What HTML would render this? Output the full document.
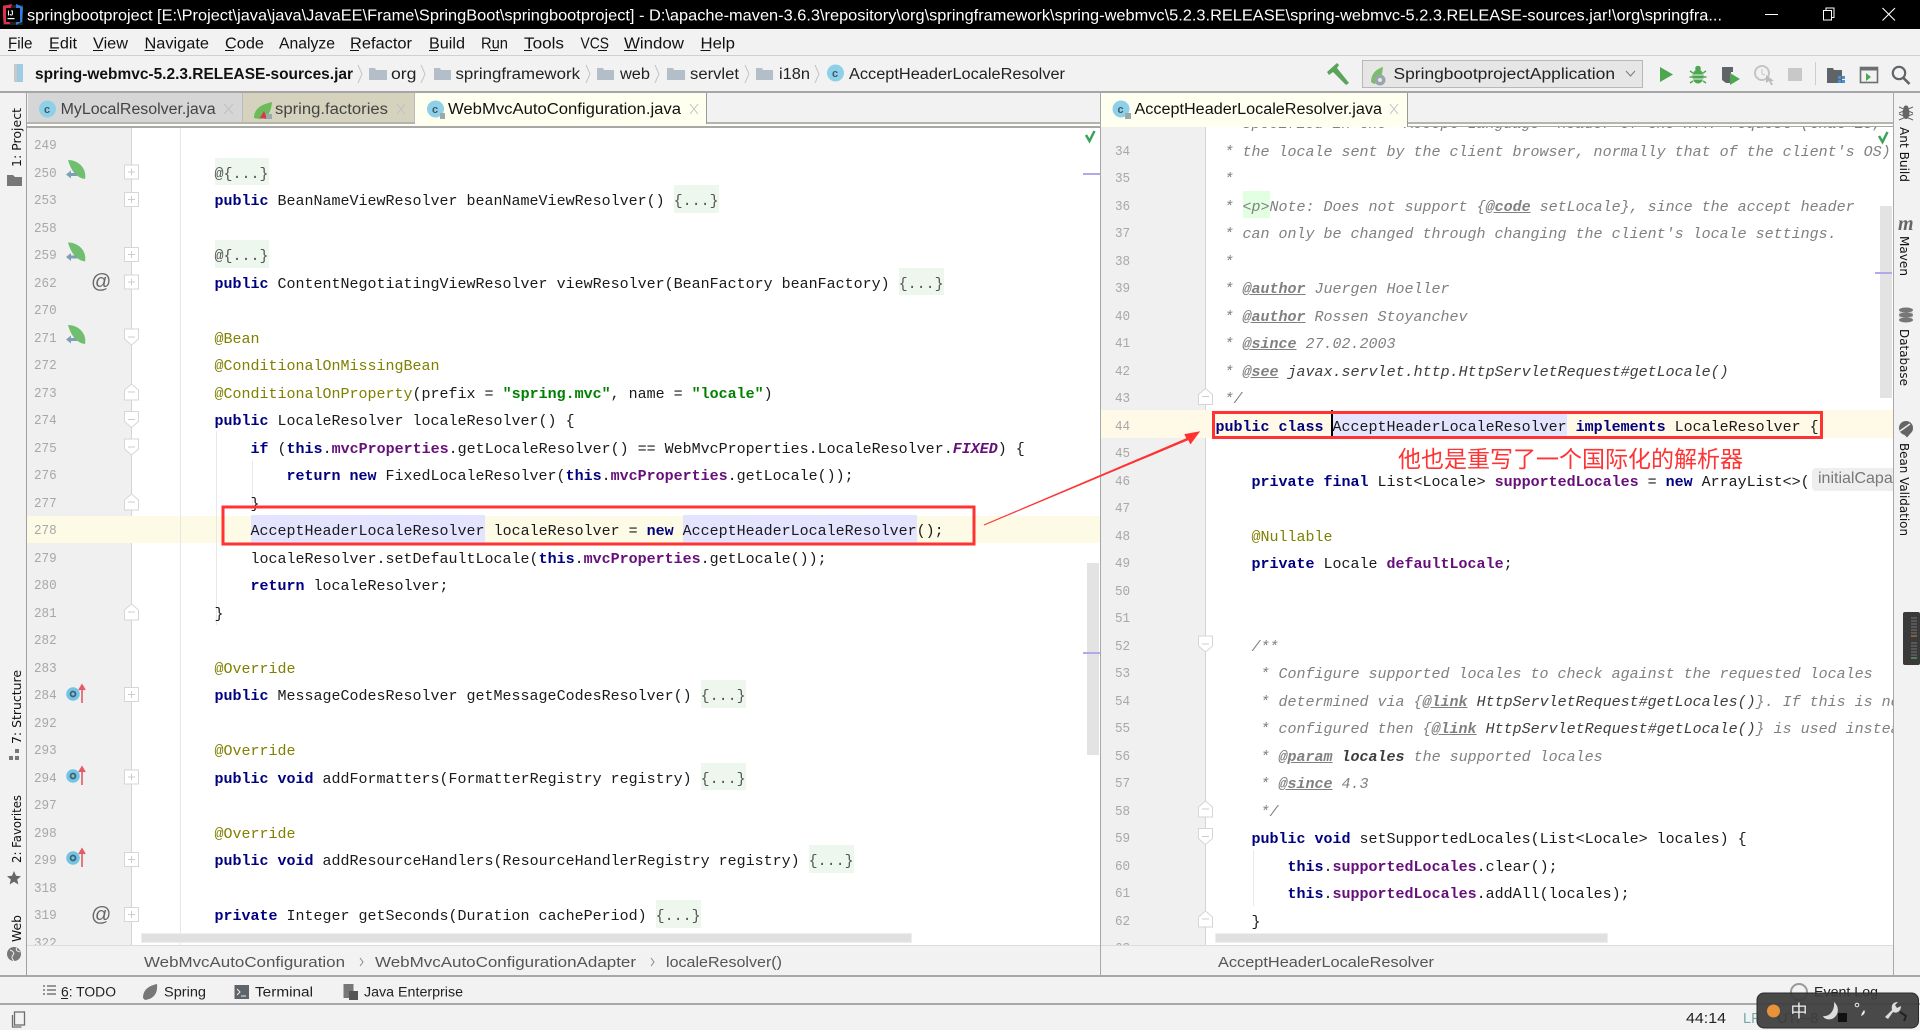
<!DOCTYPE html>
<html lang="en"><head><meta charset="utf-8"><title>springbootproject</title>
<style>
html,body{margin:0;padding:0;background:#f2f2f2}
body{width:1920px;height:1030px;position:relative;overflow:hidden;font-family:"Liberation Sans",sans-serif}
.a{position:absolute}
pre{margin:0;position:absolute;font:15px/27.5px "Liberation Mono",monospace;color:#1a1a1a;white-space:pre}
pre.n{font-size:14px;color:#a8a8a8;transform:scaleX(.9);transform-origin:left top}
b.k{color:#000080;font-weight:bold}
b.d{color:#660e7a;font-weight:bold}
b.s{color:#008000;font-weight:bold}
i.an{color:#808000;font-style:normal}
i.c{color:#808080;font-style:italic}
i.c b{text-decoration:underline;font-weight:bold}
i.c u{color:#3d3d3d;text-decoration:none}
i.c em{color:#3d3d3d;font-weight:bold;font-style:italic}
.f{background:#edf7ed;padding:7.75px 0 2.75px;color:#555}
.h{background:#e4e4ff;padding:7.75px 0 2.75px}
svg{position:absolute;left:0;top:0}
</style></head><body>
<!-- chrome -->
<div class="a" style="left:0;top:0;width:1920px;height:29px;background:#000"></div>
<div class="a" style="left:0;top:55px;width:1920px;height:1px;background:#d0d0d0"></div>
<div class="a" style="left:0;top:91px;width:1920px;height:2px;background:#a6a6a6"></div>
<!-- tabs -->
<div class="a" style="left:27px;top:122px;width:1866px;height:2px;background:#b4b4b4"></div>
<div class="a" style="left:27px;top:124px;width:1866px;height:1.5px;background:#fffff0"></div>
<div class="a" style="left:27px;top:125.5px;width:1866px;height:2px;background:#a8a8a8"></div>
<div class="a" style="left:27.5px;top:93px;width:214.5px;height:29px;background:#d6d6d6;border-right:1px solid #bbb"></div>
<div class="a" style="left:243px;top:93px;width:171px;height:29px;background:#d5d2bd;border-right:1px solid #bbb"></div>
<div class="a" style="left:415px;top:93px;width:291px;height:31px;background:#fffff0;border-right:1px solid #999"></div>
<div class="a" style="left:1101px;top:93px;width:306px;height:34px;background:#fffff0;border-right:1px solid #999"></div>
<!-- panes -->
<div class="a" style="left:27px;top:127.5px;width:105px;height:817.5px;background:#f0f0f0;border-right:1px solid #d4d4d4;box-sizing:border-box"></div>
<div class="a" style="left:132px;top:127.5px;width:968px;height:817.5px;background:#fff"></div>
<div class="a" style="left:1101px;top:127px;width:105px;height:818px;background:#f0f0f0;border-right:1px solid #d4d4d4;box-sizing:border-box"></div>
<div class="a" style="left:1206px;top:127px;width:687px;height:818px;background:#fff"></div>
<div class="a" style="left:27px;top:515.5px;width:1073px;height:27.5px;background:#fdfbe6"></div>
<div class="a" style="left:1101px;top:410px;width:792px;height:27.5px;background:#fff9e8"></div>
<div class="a" style="left:180px;top:127.5px;width:1px;height:817.5px;background:#e6e6e6"></div>
<div class="a" style="left:216px;top:431px;width:1px;height:194px;background:#e8e8e8"></div>
<div class="a" style="left:252px;top:461px;width:1px;height:46px;background:#e8e8e8"></div>
<div class="a" style="left:1253px;top:850px;width:1px;height:56px;background:#e8e8e8"></div>
<!-- left numbers -->
<pre class="n a" style="left:34px;top:133px;height:812px;overflow:hidden">249
250
253
258
259
262
270
271
272
273
274
275
276
277
278
279
280
281
282
283
284
292
293
294
297
298
299
318
319
322</pre>
<!-- left code -->
<div class="a" style="left:132px;top:127.5px;width:955px;height:817.5px;overflow:hidden">
<pre style="left:82.5px;top:5.5px">

<span class="f">@{...}</span>
<b class="k">public</b> BeanNameViewResolver beanNameViewResolver() <span class="f">{...}</span>

<span class="f">@{...}</span>
<b class="k">public</b> ContentNegotiatingViewResolver viewResolver(BeanFactory beanFactory) <span class="f">{...}</span>

<i class="an">@Bean</i>
<i class="an">@ConditionalOnMissingBean</i>
<i class="an">@ConditionalOnProperty</i>(prefix = <b class="s">"spring.mvc"</b>, name = <b class="s">"locale"</b>)
<b class="k">public</b> LocaleResolver localeResolver() {
    <b class="k">if</b> (<b class="k">this</b>.<b class="d">mvcProperties</b>.getLocaleResolver() == WebMvcProperties.LocaleResolver.<b class="d" style="font-style:italic">FIXED</b>) {
        <b class="k">return new</b> FixedLocaleResolver(<b class="k">this</b>.<b class="d">mvcProperties</b>.getLocale());
    }
    <span class="h">AcceptHeaderLocaleResolver</span> localeResolver = <b class="k">new</b> <span class="h">AcceptHeaderLocaleResolver</span>();
    localeResolver.setDefaultLocale(<b class="k">this</b>.<b class="d">mvcProperties</b>.getLocale());
    <b class="k">return</b> localeResolver;
}

<i class="an">@Override</i>
<b class="k">public</b> MessageCodesResolver getMessageCodesResolver() <span class="f">{...}</span>

<i class="an">@Override</i>
<b class="k">public void</b> addFormatters(FormatterRegistry registry) <span class="f">{...}</span>

<i class="an">@Override</i>
<b class="k">public void</b> addResourceHandlers(ResourceHandlerRegistry registry) <span class="f">{...}</span>

<b class="k">private</b> Integer getSeconds(Duration cachePeriod) <span class="f">{...}</span></pre>
</div>
<!-- right numbers -->
<pre class="n a" style="left:1115px;top:138.5px;height:806px;overflow:hidden">34
35
36
37
38
39
40
41
42
43
44
45
46
47
48
49
50
51
52
53
54
55
56
57
58
59
60
61
62
63</pre>
<!-- right code -->
<div class="a" style="left:1206px;top:127px;width:687px;height:818px;overflow:hidden">
<pre style="left:9.5px;top:-16px"><i class="c"> * specified in the "Accept-Language" header of the HTTP request (that is,</i>
<i class="c"> * the locale sent by the client browser, normally that of the client's OS).</i>
<i class="c"> *</i>
<i class="c"> * <span style="background:#e2ffe2;padding:7.75px 0 2.75px">&lt;p&gt;</span>Note: Does not support {<b>@code</b> setLocale}, since the accept header</i>
<i class="c"> * can only be changed through changing the client's locale settings.</i>
<i class="c"> *</i>
<i class="c"> * <b>@author</b> Juergen Hoeller</i>
<i class="c"> * <b>@author</b> Rossen Stoyanchev</i>
<i class="c"> * <b>@since</b> 27.02.2003</i>
<i class="c"> * <b>@see</b> <u>javax.servlet.http.HttpServletRequest#getLocale()</u></i>
<i class="c"> */</i>
<b class="k">public class</b> <span class="h">AcceptHeaderLocaleResolver</span> <b class="k">implements</b> LocaleResolver {

    <b class="k">private final</b> List&lt;Locale&gt; <b class="d">supportedLocales</b> = <b class="k">new</b> ArrayList&lt;&gt;(

    <i class="an">@Nullable</i>
    <b class="k">private</b> Locale <b class="d">defaultLocale</b>;


    <i class="c">/**</i>
<i class="c">     * Configure supported locales to check against the requested locales</i>
<i class="c">     * determined via {<b>@link</b> <u>HttpServletRequest#getLocales()</u>}. If this is not</i>
<i class="c">     * configured then {<b>@link</b> <u>HttpServletRequest#getLocale()</u>} is used instead</i>
<i class="c">     * <b>@param</b> <em>locales</em> the supported locales</i>
<i class="c">     * <b>@since</b> 4.3</i>
<i class="c">     */</i>
    <b class="k">public void</b> setSupportedLocales(List&lt;Locale&gt; locales) {
        <b class="k">this</b>.<b class="d">supportedLocales</b>.clear();
        <b class="k">this</b>.<b class="d">supportedLocales</b>.addAll(locales);
    }</pre>
</div>
<!-- caret -->
<div class="a" style="left:1331px;top:410px;width:2px;height:27.5px;background:#000"></div>
<div class="a" style="left:1812px;top:468px;width:81px;height:23px;background:#eeeeee;border-radius:4px 0 0 4px;overflow:hidden;color:#787878;font-size:16px;line-height:22px;padding-left:6px;box-sizing:border-box;white-space:nowrap">initialCapacity:</div>
<!-- scrollbars -->
<div class="a" style="left:1087px;top:563px;width:12px;height:192px;background:#e3e3e3"></div>
<div class="a" style="left:1880px;top:206px;width:12px;height:192px;background:#e3e3e3"></div>
<div class="a" style="left:141px;top:933px;width:771px;height:10px;background:#e0e0e0;border:1px solid #eee;box-sizing:border-box"></div>
<div class="a" style="left:1215px;top:933px;width:393px;height:10px;background:#e0e0e0;border:1px solid #eee;box-sizing:border-box"></div>
<div class="a" style="left:1083px;top:173px;width:17px;height:2px;background:#b4a8ec"></div>
<div class="a" style="left:1083px;top:652px;width:17px;height:2px;background:#b4a8ec"></div>
<div class="a" style="left:1875px;top:272px;width:17px;height:2px;background:#b4a8ec"></div>
<!-- bottom -->
<div class="a" style="left:27px;top:945px;width:1866px;height:30px;background:#f2f2f2;border-top:1px solid #dcdcdc;box-sizing:border-box"></div>
<div class="a" style="left:0;top:975px;width:1920px;height:1.5px;background:#a8a8a8"></div>
<div class="a" style="left:0;top:1003px;width:1920px;height:1.5px;background:#a8a8a8"></div>
<div class="a" style="left:26px;top:92px;width:1px;height:883px;background:#a0a0a0"></div>
<div class="a" style="left:1100px;top:92px;width:1px;height:883px;background:#a8a8a8"></div>
<div class="a" style="left:1893px;top:92px;width:1px;height:883px;background:#a8a8a8"></div>

<svg width="1920" height="1030" viewBox="0 0 1920 1030" xmlns="http://www.w3.org/2000/svg" font-family="'Liberation Sans',sans-serif">
<!-- title bar -->
<g>
<rect x="3" y="5" width="20" height="20" fill="#222"/>
<path d="M3 6l9-2-3 10-6 2zM3 16l6-2 1 10-6 0z" fill="#e0324a"/>
<path d="M16 4l7 3-1 15-6 3z" fill="#2d7fe0"/>
<rect x="6" y="8" width="14" height="14" fill="#000"/>
<text x="7.5" y="15.5" font-size="7" font-weight="bold" fill="#fff">IJ</text>
<rect x="7.5" y="18" width="7" height="1.2" fill="#fff"/>
<text x="27" y="20.5" font-size="16" fill="#fff" textLength="1695" lengthAdjust="spacingAndGlyphs">springbootproject [E:\Project\java\java\JavaEE\Frame\SpringBoot\springbootproject] - D:\apache-maven-3.6.3\repository\org\springframework\spring-webmvc\5.2.3.RELEASE\spring-webmvc-5.2.3.RELEASE-sources.jar!\org\springfra...</text>
<rect x="1765" y="14" width="13" height="1" fill="#fff"/>
<path d="M1823.5 10.5h8v9.5h-8zM1826 10.5v-2.5h8v9.5h-2.5" fill="none" stroke="#fff"/>
<path d="M1882.5 8l12.5 12.5M1895 8l-12.5 12.5" stroke="#fff" stroke-width="1.1"/>
</g>
<!-- menu -->
<g font-size="15.5" fill="#111">
<text x="8" y="48.5" textLength="24.5" lengthAdjust="spacingAndGlyphs">File</text>
<text x="49" y="48.5" textLength="28" lengthAdjust="spacingAndGlyphs">Edit</text>
<text x="93" y="48.5" textLength="35" lengthAdjust="spacingAndGlyphs">View</text>
<text x="144.5" y="48.5" textLength="64.5" lengthAdjust="spacingAndGlyphs">Navigate</text>
<text x="225" y="48.5" textLength="39" lengthAdjust="spacingAndGlyphs">Code</text>
<text x="279" y="48.5" textLength="56" lengthAdjust="spacingAndGlyphs">Analyze</text>
<text x="350" y="48.5" textLength="62" lengthAdjust="spacingAndGlyphs">Refactor</text>
<text x="429" y="48.5" textLength="36" lengthAdjust="spacingAndGlyphs">Build</text>
<text x="481" y="48.5" textLength="27" lengthAdjust="spacingAndGlyphs">Run</text>
<text x="524" y="48.5" textLength="40" lengthAdjust="spacingAndGlyphs">Tools</text>
<text x="580.5" y="48.5" textLength="28.5" lengthAdjust="spacingAndGlyphs">VCS</text>
<text x="624" y="48.5" textLength="60" lengthAdjust="spacingAndGlyphs">Window</text>
<text x="700.5" y="48.5" textLength="34.5" lengthAdjust="spacingAndGlyphs">Help</text>
</g>
<g fill="#111">
<rect x="8" y="50" width="8" height="1"/><rect x="49" y="50" width="8" height="1"/><rect x="93" y="50" width="10" height="1"/><rect x="144.5" y="50" width="10" height="1"/><rect x="225" y="50" width="9" height="1"/><rect x="350" y="50" width="9" height="1"/><rect x="429" y="50" width="9" height="1"/><rect x="490" y="50" width="8" height="1"/><rect x="524" y="50" width="8" height="1"/><rect x="598" y="50" width="9" height="1"/><rect x="624" y="50" width="13" height="1"/><rect x="700.5" y="50" width="10" height="1"/>
</g>
<!-- nav bar -->
<g>
<rect x="14" y="64" width="9" height="18" fill="#9ccde2"/><rect x="14" y="64" width="3" height="18" fill="#c8c8c8"/>
<text x="35" y="79" font-size="15.5" font-weight="bold" fill="#111" textLength="318" lengthAdjust="spacingAndGlyphs">spring-webmvc-5.2.3.RELEASE-sources.jar</text>
<g fill="none" stroke="#c4c4c4"><path d="M358 65l4 9-4 9M421 65l4 9-4 9M586 65l4 9-4 9M655 65l4 9-4 9M745 65l4 9-4 9M815 65l4 9-4 9"/></g>
<g fill="#b3bec8"><path d="M369 68h6l1 2h11v10h-18z"/><path d="M434 68h6l1 2h10v10h-17z"/><path d="M597 68h6l1 2h10v10h-17z"/><path d="M667 68h6l1 2h11v10h-18z"/><path d="M756 68h6l1 2h10v10h-17z"/></g>
<g font-size="15.5" fill="#222">
<text x="391" y="79" textLength="25.5" lengthAdjust="spacingAndGlyphs">org</text>
<text x="455.5" y="79" textLength="124.5" lengthAdjust="spacingAndGlyphs">springframework</text>
<text x="620" y="79" textLength="30" lengthAdjust="spacingAndGlyphs">web</text>
<text x="690" y="79" textLength="49" lengthAdjust="spacingAndGlyphs">servlet</text>
<text x="779" y="79" textLength="31" lengthAdjust="spacingAndGlyphs">i18n</text>
<text x="849" y="79" textLength="216" lengthAdjust="spacingAndGlyphs">AcceptHeaderLocaleResolver</text>
</g>
<circle cx="835.5" cy="73" r="8.5" fill="#8ed0e8"/><text x="832" y="77" font-size="11" font-weight="bold" fill="#3d5a68">c</text>
<!-- right toolbar -->
<path d="M1327 72l10-9 2 2-2 3 12 15-3 2-13-13-4 3z" fill="#5aa35a"/>
<rect x="1362.5" y="60.5" width="280" height="27" fill="#e6e6e6" stroke="#b8b8b8"/>
<path d="M1371 82c0-8 5-13 12-15-1 10-3 15-9 17z" fill="#7cbd6a"/>
<circle cx="1380" cy="80" r="5.5" fill="#9aa5ad"/><circle cx="1380" cy="80" r="2" fill="#e6e6e6"/>
<text x="1393.5" y="79" font-size="15.5" fill="#222" textLength="221.5" lengthAdjust="spacingAndGlyphs">SpringbootprojectApplication</text>
<path d="M1626 71l4.5 5 4.5-5" fill="none" stroke="#777"/>
<path d="M1660 67l13 7.500-13 7.500z" fill="#4fa650"/>
<ellipse cx="1698" cy="76.500" rx="5.500" ry="7" fill="#4fa650"/><circle cx="1698" cy="68.500" r="2.800" fill="#4fa650"/>
<path d="M1690 71l3 2M1706 71l-3 2M1689.500 77h3M1706.500 77h-3M1690 83l3-2M1706 83l-3-2" stroke="#4fa650" stroke-width="1.500" fill="none"/>
<path d="M1693 75h10M1693 79h10" stroke="#e8f2e8" stroke-width="1"/>
<path d="M1722 67h11v5h-2v11l-5 0-4-3z" fill="#5f6468"/><path d="M1730 73l10 6-10 6z" fill="#4fa650"/>
<circle cx="1762" cy="73" r="7" fill="none" stroke="#c4c4c4" stroke-width="2"/><path d="M1762 69v5l3 1" stroke="#c4c4c4" fill="none"/><path d="M1766 75l8 6-3 0 2 4-2 0-2-4-3 2z" fill="#bbb"/>
<rect x="1788" y="68" width="14" height="13" fill="#c8c8c8"/>
<rect x="1815" y="62" width="1" height="23" fill="#ccc"/>
<path d="M1827 68h6l1 2h8v13h-15z" fill="#5f6468"/><path d="M1838 76h3v3h-3zM1842 76h3v3h-3zM1838 80h3v3h-3zM1842 80h3v3h-3z" fill="#4a90d9"/>
<rect x="1860.5" y="67.5" width="17" height="15" fill="none" stroke="#6a6f72" stroke-width="1.6"/><rect x="1860.5" y="67.5" width="17" height="3" fill="#6a6f72"/><path d="M1866 73l5 4-5 4z" fill="#4fa650"/>
<circle cx="1899" cy="73" r="6.2" fill="none" stroke="#5f6468" stroke-width="2.2"/><path d="M1903.5 78l6 6" stroke="#5f6468" stroke-width="2.6"/>
</g>
<!-- tab labels -->
<g font-size="15.5" fill="#444">
<text x="60.6" y="114" textLength="155" lengthAdjust="spacingAndGlyphs">MyLocalResolver.java</text>
<text x="275" y="114" textLength="113" lengthAdjust="spacingAndGlyphs">spring.factories</text>
<text x="448" y="114" fill="#111" textLength="233" lengthAdjust="spacingAndGlyphs">WebMvcAutoConfiguration.java</text>
<text x="1134.5" y="114" fill="#111" textLength="247.5" lengthAdjust="spacingAndGlyphs">AcceptHeaderLocaleResolver.java</text>
</g>
<g stroke="#c0c0c0" stroke-width="1" fill="none"><path d="M224 104l9 10M233 104l-9 10M397 104l8 10M405 104l-8 10M690 104l8 10M698 104l-8 10M1390 104l8 10M1398 104l-8 10"/></g>
<circle cx="47.5" cy="109" r="8.5" fill="#8ed0e8"/><text x="44" y="113" font-size="11" font-weight="bold" fill="#3d5a68">c</text>
<circle cx="435.5" cy="109" r="8.5" fill="#8ed0e8"/><text x="432" y="113" font-size="11" font-weight="bold" fill="#3d5a68">c</text><rect x="440" y="113" width="5" height="6" fill="#9aa"/>
<circle cx="1121" cy="109" r="8.5" fill="#8ed0e8"/><text x="1117.5" y="113" font-size="11" font-weight="bold" fill="#3d5a68">c</text><rect x="1125" y="113" width="6" height="6" fill="#9aa"/>
<path d="M254 118c0-8 5-13 18-16-1 11-5 16-12 17z" fill="#6cba5a"/><path d="M264 111l3 8-7-1z" fill="#e0324a"/><rect x="266" y="114" width="6" height="5" fill="#9aa"/>
<!-- green checks -->
<path d="M1086 135l3.500 6 5-10" fill="none" stroke="#3aa35a" stroke-width="2.500"/>
<path d="M1879 136l3.500 6 5-10" fill="none" stroke="#3aa35a" stroke-width="2.500"/>
<!-- left tool strip -->
<g font-family="'DejaVu Sans',sans-serif" font-size="12.500" fill="#111">
<text transform="translate(21,167) rotate(-90)" textLength="59" lengthAdjust="spacingAndGlyphs">1: Project</text>
<text transform="translate(21,744) rotate(-90)" textLength="74" lengthAdjust="spacingAndGlyphs">7: Structure</text>
<text transform="translate(21,863) rotate(-90)" textLength="68" lengthAdjust="spacingAndGlyphs">2: Favorites</text>
<text transform="translate(21,942) rotate(-90)" textLength="27" lengthAdjust="spacingAndGlyphs">Web</text>
</g>
<path d="M7 175h6l2 2h7v9H7z" fill="#777"/>
<g fill="#777"><rect x="9" y="756" width="4" height="4"/><rect x="15" y="756" width="4" height="4"/><rect x="15" y="749" width="4" height="4"/></g>
<path d="M14 871l2 4.700 5 .5-3.800 3.300 1.200 5-4.400-2.700-4.400 2.700 1.200-5-3.800-3.300 5-.5z" fill="#666"/>
<circle cx="14" cy="954" r="7" fill="#777"/><path d="M10 950c3 1 5 3 3 5s-1 4 1 6M17 948c-2 2 0 3 3 4" stroke="#eee" fill="none"/>
<!-- right tool strip -->
<g font-family="'DejaVu Sans',sans-serif" font-size="12.500" fill="#111">
<text transform="translate(1900,127) rotate(90)" textLength="55" lengthAdjust="spacingAndGlyphs">Ant Build</text>
<text transform="translate(1900,236) rotate(90)" textLength="40" lengthAdjust="spacingAndGlyphs">Maven</text>
<text transform="translate(1900,329) rotate(90)" textLength="57" lengthAdjust="spacingAndGlyphs">Database</text>
<text transform="translate(1900,443) rotate(90)" textLength="93" lengthAdjust="spacingAndGlyphs">Bean Validation</text>
</g>
<g fill="#666"><ellipse cx="1906" cy="113" rx="3.500" ry="6"/><circle cx="1906" cy="108" r="2.500"/><path d="M1899 107l14 6M1913 107l-14 6M1899 120l14-6M1913 120l-14-6" stroke="#666"/></g>
<text x="1898" y="230" font-family="'Liberation Serif',serif" font-size="20" font-style="italic" font-weight="bold" fill="#666">m</text>
<g fill="#777"><ellipse cx="1906" cy="310" rx="7" ry="2.500"/><ellipse cx="1906" cy="315" rx="7" ry="2.500"/><ellipse cx="1906" cy="320" rx="7" ry="2.500"/><ellipse cx="1906" cy="315" rx="7" ry="7" opacity=".25"/></g>
<circle cx="1906" cy="428" r="7" fill="#666"/><path d="M1900 431l10-7" stroke="#eee" stroke-width="1.500"/><path d="M1904 433l3 3 5-6" stroke="#666" stroke-width="2" fill="none"/>
<rect x="1903" y="612" width="17" height="53" rx="2" fill="#3a3a3a"/>
<path d="M1911 618h6M1911 621h6M1911 624h6M1911 627h6M1911 630h6M1911 633h6M1911 643h6M1911 646h6M1911 649h6M1911 652h6M1911 655h6" stroke="#777"/><path d="M1911 636h6" stroke="#c98a3a"/><path d="M1911 658h6" stroke="#6cc06c"/>
<!-- left gutter icons -->
<g><path d="M68 160c11 0 19 9 17 19-8-1-14-8-17-19z" fill="#6fbf6f"/><path d="M66 174.500l5-4v2.500h6v3h-6v2.500z" fill="#7f9fb4"/></g>
<g transform="translate(0,82.500)"><path d="M68 160c11 0 19 9 17 19-8-1-14-8-17-19z" fill="#6fbf6f"/><path d="M66 174.500l5-4v2.500h6v3h-6v2.500z" fill="#7f9fb4"/></g>
<g transform="translate(0,165)"><path d="M68 160c11 0 19 9 17 19-8-1-14-8-17-19z" fill="#6fbf6f"/><path d="M66 174.500l5-4v2.500h6v3h-6v2.500z" fill="#7f9fb4"/></g>
<text x="91" y="288" font-size="20" fill="#666">@</text>
<text x="91" y="921" font-size="20" fill="#666">@</text>
<g transform="translate(0,694)"><circle cx="73" cy="0" r="6.800" fill="#73c5e6"/><circle cx="73" cy="0" r="2.500" fill="none" stroke="#44606e" stroke-width="1.800"/><path d="M82 9v-17M79 -4l3-5 3 5" stroke="#e25a66" stroke-width="1.600" fill="#e25a66"/></g>
<g transform="translate(0,776)"><circle cx="73" cy="0" r="6.800" fill="#73c5e6"/><circle cx="73" cy="0" r="2.500" fill="none" stroke="#44606e" stroke-width="1.800"/><path d="M82 9v-17M79 -4l3-5 3 5" stroke="#e25a66" stroke-width="1.600" fill="#e25a66"/></g>
<g transform="translate(0,858)"><circle cx="73" cy="0" r="6.800" fill="#73c5e6"/><circle cx="73" cy="0" r="2.500" fill="none" stroke="#44606e" stroke-width="1.800"/><path d="M82 9v-17M79 -4l3-5 3 5" stroke="#e25a66" stroke-width="1.600" fill="#e25a66"/></g>
<!-- folds -->
<g fill="#fff" stroke="#d6d6d6">
<path d="M124.500 165h14v14h-14zM124.500 192.500h14v14h-14zM124.500 247.500h14v14h-14zM124.500 275h14v14h-14zM124.500 687.500h14v14h-14zM124.500 770h14v14h-14zM124.500 852.500h14v14h-14zM124.500 907.500h14v14h-14z"/>
<path d="M124.500 329h14v10l-7 6-7-6zM124.500 411.500h14v10l-7 6-7-6zM124.500 439h14v10l-7 6-7-6z"/>
<path d="M124.500 400h14v-10l-7-6-7 6zM124.500 510h14v-10l-7-6-7 6zM124.500 620h14v-10l-7-6-7 6z"/>
<path d="M1198.500 636h14v10l-7 6-7-6zM1198.500 828.500h14v10l-7 6-7-6z"/>
<path d="M1198.500 404.500h14v-10l-7-6-7 6zM1198.500 817h14v-10l-7-6-7 6zM1198.500 927h14v-10l-7-6-7 6z"/>
</g>
<g stroke="#ccc"><path d="M128 172h7M131.500 168.500v7M128 199.500h7M131.500 196v7M128 254.500h7M131.500 251v7M128 282h7M131.500 278.500v7M128 694.500h7M131.500 691v7M128 777h7M131.500 773.500v7M128 859.500h7M131.500 856v7M128 914.500h7M131.500 911v7M128 337h7M128 419.500h7M128 447h7M128 392h7M128 502h7M128 612h7M1202 644h7M1202 836.500h7M1202 396.500h7M1202 809h7M1202 919h7"/></g>
<!-- breadcrumbs -->
<g font-size="15" fill="#555">
<text x="144" y="967" textLength="201" lengthAdjust="spacingAndGlyphs">WebMvcAutoConfiguration</text>
<text x="375" y="967" textLength="261" lengthAdjust="spacingAndGlyphs">WebMvcAutoConfigurationAdapter</text>
<text x="666" y="967" textLength="116" lengthAdjust="spacingAndGlyphs">localeResolver()</text>
<text x="1218" y="967" textLength="216" lengthAdjust="spacingAndGlyphs">AcceptHeaderLocaleResolver</text>
</g>
<path d="M360 958l3 4-3 4M651 958l3 4-3 4" fill="none" stroke="#888"/>
<!-- tool windows bar -->
<g font-size="13.500" fill="#222">
<text x="61" y="996.500" textLength="55" lengthAdjust="spacingAndGlyphs">6: TODO</text>
<text x="164" y="996.500" textLength="42" lengthAdjust="spacingAndGlyphs">Spring</text>
<text x="255" y="996.500" textLength="58" lengthAdjust="spacingAndGlyphs">Terminal</text>
<text x="364" y="996.500" textLength="99" lengthAdjust="spacingAndGlyphs">Java Enterprise</text>
</g>
<rect x="61" y="998" width="7" height="1" fill="#222"/>
<g stroke="#777" stroke-width="1.500"><path d="M43 986h2M47 986h9M43 990h2M47 990h9M43 994h2M47 994h9"/></g>
<path d="M143 998c0-8 5-12 14-14 1 10-4 15-12 16z" fill="#777"/>
<rect x="234.500" y="985" width="14.500" height="14" fill="#5f6468"/><path d="M237 989l3 3-3 3M241 996h5" stroke="#eee" fill="none"/>
<rect x="343.500" y="984" width="10" height="14" fill="#777"/><rect x="349" y="991" width="9" height="9" fill="#555"/>
<!-- status -->
<rect x="14.500" y="1012" width="10" height="13" fill="none" stroke="#6d6d6d" stroke-width="1.300"/><path d="M12.500 1015v12h9" fill="none" stroke="#6d6d6d" stroke-width="1.300"/>
<text x="1686" y="1023" font-size="14.500" fill="#222" textLength="40" lengthAdjust="spacingAndGlyphs">44:14</text>
<text x="1743" y="1023" font-size="14.500" fill="#7aa">LF</text>
<text x="1777" y="1023" font-size="14.500" fill="#444">UTF-8</text>
<circle cx="1799" cy="992" r="8" fill="none" stroke="#999" stroke-width="2"/>
<text x="1814" y="996.500" font-size="13.500" fill="#222" textLength="64" lengthAdjust="spacingAndGlyphs">Event Log</text>
<!-- IME -->
<rect x="1757" y="993" width="161.500" height="35" rx="7" fill="#3c3c3c" fill-opacity=".93" stroke="#2a2a2a"/>
<circle cx="1773.500" cy="1011" r="6.500" fill="#e8923a"/>
<text x="1790.500" y="1017" font-family="'Noto Sans CJK SC',sans-serif" font-size="17" fill="#eee">中</text>
<path d="M1834 1002c5 4 6 13-2 17-4 1-8 0-9-3 7 1 12-6 11-14z" fill="#ddd"/>
<rect x="1838" y="1013" width="9" height="9" fill="#111"/>
<circle cx="1857" cy="1005" r="1.800" fill="none" stroke="#eee"/><path d="M1864 1010c2 2 0 5-3 6l1-3z" fill="#eee"/>
<path d="M1885 1017l7-7c-1-5 1-8 6-8l-3 3 2 3 4-2c0 5-4 8-8 6l-5 7z" fill="#ddd"/>
<path d="M1900 1012l6 4-2 5" fill="none" stroke="#222" stroke-width="2"/>
<!-- annotations -->
<rect x="223" y="507" width="751" height="37" fill="none" stroke="#f33" stroke-width="3"/>
<rect x="1213.500" y="412.500" width="608" height="25" fill="none" stroke="#f33" stroke-width="3"/>
<path d="M984 525L1187 438.500l-2-4L1199 432l-8.500 11.500-2-4L984 525z" fill="#f33" stroke="#f33" stroke-width="1"/>
<text x="1398" y="467" font-family="'Liberation Sans','Noto Sans CJK SC',sans-serif" font-size="23" fill="#f33">他也是重写了一个国际化的解析器</text>
</svg>
</body></html>
